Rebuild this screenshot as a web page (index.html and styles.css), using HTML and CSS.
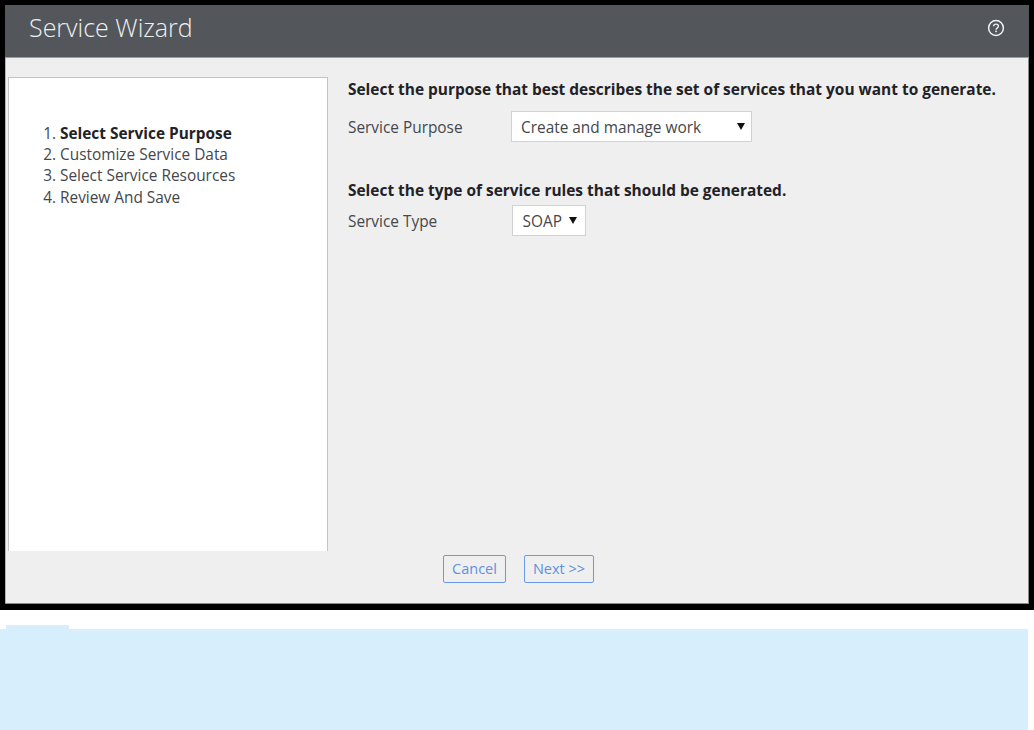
FILE: index.html
```html
<!DOCTYPE html>
<html lang="en">
<head>
<meta charset="utf-8">
<title>Service Wizard</title>
<link rel="stylesheet" href="styles.css">
</head>
<body>
<div class="frame">
  <div class="dialog">
    <header class="titlebar">
      <h1 class="title">Service Wizard</h1>
      <svg class="help" width="18" height="18" viewBox="0 0 18 18" aria-hidden="true">
        <circle cx="9" cy="9" r="7.4" fill="none" stroke="#f2f2f2" stroke-width="1.5"/>
        <path d="M6.6 7.2C6.7 5.8 7.7 5.1 9 5.1c1.4 0 2.4.8 2.4 2 0 1-.6 1.5-1.3 2-.7.4-1 .8-1 1.6" fill="none" stroke="#f2f2f2" stroke-width="1.4"/>
        <rect x="8.2" y="11.6" width="1.6" height="1.6" fill="#f2f2f2"/>
      </svg>
    </header>
    <div class="content">
      <nav class="steps">
        <ol class="step-list">
          <li class="step current">Select Service Purpose</li>
          <li class="step">Customize Service Data</li>
          <li class="step">Select Service Resources</li>
          <li class="step">Review And Save</li>
        </ol>
      </nav>
      <main class="form">
        <h2 class="prompt">Select the purpose that best describes the set of services that you want to generate.</h2>
        <div class="field">
          <span class="label">Service Purpose</span>
          <span class="select wide">Create and manage work<i class="arrow"></i></span>
        </div>
        <h2 class="prompt second">Select the type of service rules that should be generated.</h2>
        <div class="field type">
          <span class="label">Service Type</span>
          <span class="select narrow">SOAP<i class="arrow"></i></span>
        </div>
      </main>
    </div>
    <footer class="actions">
      <button class="btn cancel" type="button">Cancel</button>
      <button class="btn next" type="button">Next &gt;&gt;</button>
    </footer>
  </div>
</div>
<div class="lower">
  <div class="tab"></div>
  <div class="band"></div>
</div>
</body>
</html>
```
FILE: styles.css
```css
* { box-sizing: border-box; }
html, body { margin: 0; padding: 0; background: #fff; }
body { width: 1034px; height: 730px; overflow: hidden; font-family: "Open Sans", sans-serif; font-size: 15.4px; color: #44474c; }
.frame { background: #000; height: 610px; padding: 5px 5px 6px 5px; }
.dialog { height: 599px; background: #efefef; border-bottom: 1px solid #8a8a8a; display: flex; flex-direction: column; }
.titlebar { height: 53px; flex: none; background: #53565b; border-bottom: 1px solid #9a9c9e; display: flex; align-items: center; justify-content: space-between; padding: 0 24px 8px 24px; }
.title { margin: 0; font-size: 25px; font-weight: 300; color: #eef0f0; line-height: 32px; }
.help { display: block; margin-top: 1px; }
.content { flex: 1; display: flex; padding: 19px 0 0 3px; min-height: 0; box-shadow: inset 1px 0 0 #b5b5b5, inset -1px 0 0 #8a8a8a; }
.steps { width: 320px; flex: none; background: #fff; border: 1px solid #c4c4c4; border-bottom: 0; padding: 45px 0 0 0; }
.step-list { margin: 0; padding: 0 0 0 51px; line-height: 21.2px; }
.step.current { font-weight: 700; color: #1f2226; }
.step::marker { font-weight: 400; color: #44474c; }
.form { flex: 1; padding: 2px 0 0 20px; }
.prompt { margin: 0; font-size: 15.45px; font-weight: 700; line-height: 21px; color: #1f2226; white-space: nowrap; }
.prompt.second { margin-top: 38px; }
.field { display: flex; align-items: center; margin-top: 11px; height: 31px; }
.field.type { margin-top: 4px; }
.label { width: 162.5px; flex: none; padding-top: 2px; }
.type .label { width: 164px; }
.select { display: flex; align-items: center; justify-content: space-between; height: 31px; background: #fff; border: 1px solid #d2d2d2; padding: 2px 5px 0 9.5px; }
.wide { width: 241px; }
.narrow { width: 74px; }
.arrow { width: 0; height: 0; border-left: 4px solid transparent; border-right: 4px solid transparent; border-top: 7px solid #111; margin: -3px 2px 0 0; }
.wide .arrow { margin-right: 1px; }
.narrow { padding-right: 6px; }
.actions { flex: none; height: 52px; display: flex; justify-content: center; gap: 18px; padding: 4px 0 0 3px; box-shadow: inset 1px 0 0 #b5b5b5, inset -1px 0 0 #8a8a8a; }
.btn { height: 28px; background: #efefef; border: 1px solid #6a9ae6; border-radius: 2px; font-family: "Open Sans", sans-serif; font-size: 14.5px; color: #5f8fe0; padding: 0 0 2px; }
.cancel { width: 63px; }
.next { width: 70px; }
.lower { padding-top: 15px; }
.tab { width: 63px; height: 4px; margin-left: 6px; background: #d7effc; }
.band { width: 1028px; height: 101px; background: #d7effc; }
```
